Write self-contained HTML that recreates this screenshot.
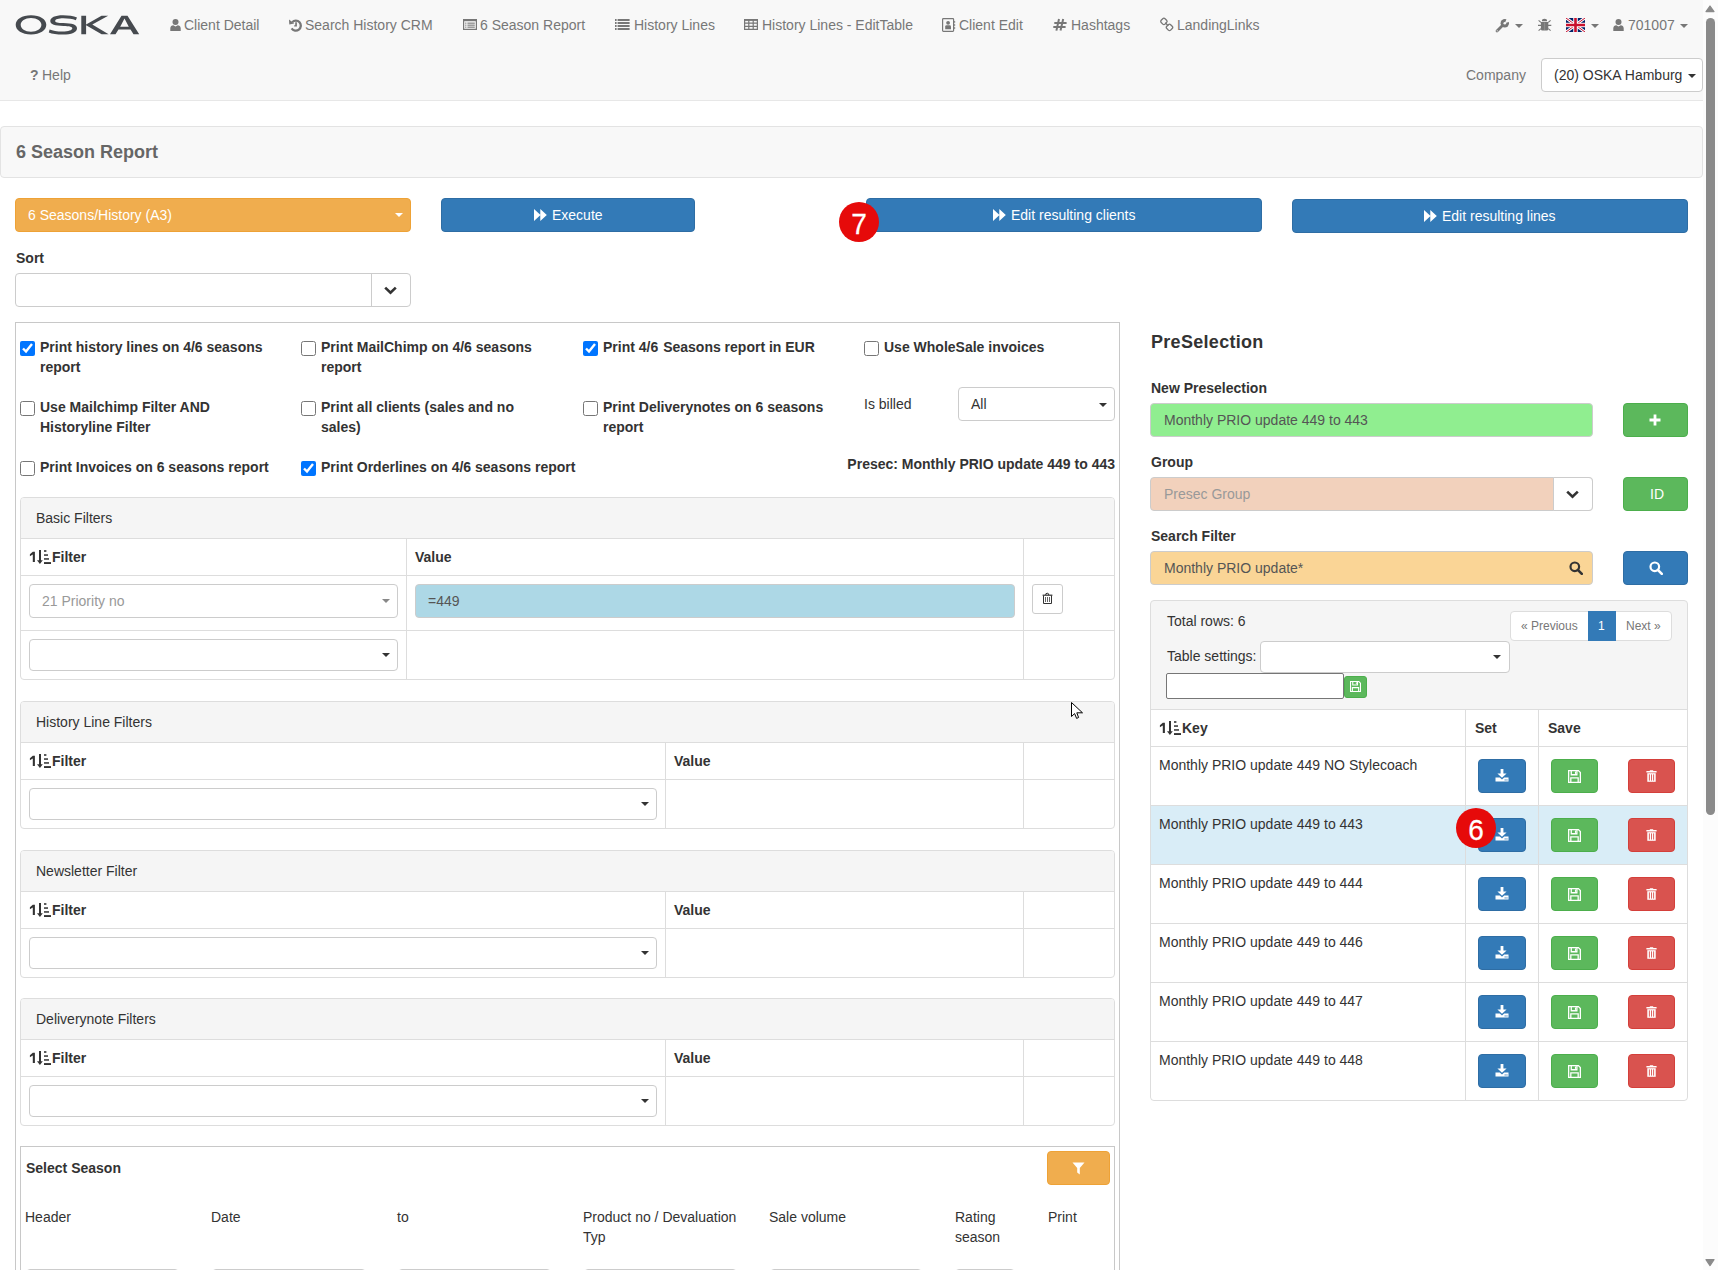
<!DOCTYPE html>
<html><head><meta charset="utf-8">
<style>
*{box-sizing:border-box}
html,body{margin:0;padding:0;overflow:hidden}
body{width:1718px;height:1270px;overflow:hidden;position:relative;background:#fff;font-family:"Liberation Sans",sans-serif;font-size:14px;line-height:20px;color:#333}
.a{position:absolute}
.t{position:absolute;white-space:nowrap;line-height:20px}
.b{font-weight:bold}
.nav{color:#777}
svg{display:block}
.ico{position:absolute}
.fc{position:absolute;background:#fff;border:1px solid #ccc;border-radius:4px}
.btn{position:absolute;border-radius:4px;border:1px solid transparent}
.bp{background:#337ab7;border-color:#2e6da4}
.bs{background:#5cb85c;border-color:#4cae4c}
.bd{background:#d9534f;border-color:#d43f3a}
.bw{background:#f0ad4e;border-color:#eea236}
.caret{position:absolute;width:0;height:0;border-top:4px solid #333;border-left:4px solid transparent;border-right:4px solid transparent}
.hl{position:absolute;height:1px;background:#ddd}
.vl{position:absolute;width:1px;background:#ddd}
.panel{position:absolute;border:1px solid #ddd;border-radius:4px;background:#fff}
.ph{position:absolute;left:0;right:0;top:0;height:41px;background:#f5f5f5;border-bottom:1px solid #ddd;border-radius:3px 3px 0 0}
.badge{position:absolute;width:40px;height:40px;border-radius:20px;background:#e60a0a;color:#fff;font-size:28px;line-height:40px;text-align:center}
</style></head><body><div id="root" style="position:relative;width:1718px;height:1270px;overflow:hidden">

<!-- NAVBAR -->
<div class="a" style="left:0;top:0;width:1703px;height:101px;background:#f8f8f8;border-bottom:1px solid #e7e7e7"></div>

<!-- logo -->
<svg class="ico" style="left:15px;top:15px" width="125" height="20" viewBox="0 0 125 20">
 <path fill="#464a4f" fill-rule="evenodd" d="M16 0.2C7 0.2 0.7 4.2 0.7 9.8S7 19.5 16 19.5 31.3 15.4 31.3 9.8 25 0.2 16 0.2ZM16 2.9C22 2.9 26.4 5.8 26.4 9.8S22 16.8 16 16.8 5.7 13.8 5.7 9.8 10 2.9 16 2.9Z"/>
 <path fill="#464a4f" d="M62 2.5C58.5 1 53.5 0.3 48 0.3 40 0.3 35.3 2.6 35.3 6 35.3 9.6 40 10.6 48.5 11 54 11.3 57.3 11.6 57.3 13.3 57.3 15.2 53.5 16.6 47.5 16.6 42 16.6 37.5 15.6 34.6 14.5L33.8 17.4C37 18.7 42 19.6 47.8 19.6 56.6 19.6 62 17.4 62 13.3 62 9.4 57 8.4 48.3 8 42.6 7.8 40.2 7.5 40.2 5.9 40.2 4.3 43.6 3.3 48.2 3.3 53.5 3.3 57.5 4 60.8 5.2Z"/>
 <path fill="#464a4f" d="M66.3 0.8H71.1V9.6L86.5 0.8H93.2L77.3 9.4 93.6 19.3H86.6L71.1 10.2V19.3H66.3Z"/>
 <path fill="#464a4f" fill-rule="evenodd" d="M106.5 0.8H112.5L124.2 19.3H118.5L115.5 14.5H103.5L100.5 19.3H95Z M109.5 3.6L105.2 11.7H113.8Z"/>
</svg>


<!-- nav row 1 -->
<svg class="ico" style="left:170px;top:19px" width="11" height="12" viewBox="0 0 11 12"><circle cx="5.5" cy="3" r="3" fill="#777"/><path d="M0.3 12V9.2C0.3 7.3 1.8 6.6 3.2 6.3L5.5 7.6 7.8 6.3C9.2 6.6 10.7 7.3 10.7 9.2V12Z" fill="#777"/></svg>
<div class="t nav" style="left:184px;top:15px">Client Detail</div>
<svg class="ico" style="left:289px;top:18px" width="13" height="14" viewBox="0 0 13 14"><path d="M3.2 4.2A5 5 0 1 1 2.6 10.4" fill="none" stroke="#777" stroke-width="2.3"/><path d="M0 1.6L0.3 6.6 5.2 5.6Z" fill="#777"/><path d="M6.2 4.2H7.9V8.6H5.2V7.2H6.2Z" fill="#777"/></svg>
<div class="t nav" style="left:305px;top:15px">Search History CRM</div>
<svg class="ico" style="left:463px;top:19px" width="14" height="11" viewBox="0 0 14 11"><path d="M0.6 0.6H13.4V10.4H0.6Z" fill="none" stroke="#777" stroke-width="1.2"/><rect x="0" y="0" width="14" height="2.2" fill="#777"/><rect x="2.2" y="3.6" width="1.2" height="1.1" fill="#777"/><rect x="4.4" y="3.6" width="7.4" height="1.1" fill="#777"/><rect x="2.2" y="5.6" width="1.2" height="1.1" fill="#777"/><rect x="4.4" y="5.6" width="7.4" height="1.1" fill="#777"/><rect x="2.2" y="7.6" width="1.2" height="1.1" fill="#777"/><rect x="4.4" y="7.6" width="7.4" height="1.1" fill="#777"/></svg>
<div class="t nav" style="left:480px;top:15px">6 Season Report</div>
<svg class="ico" style="left:615px;top:19px" width="15" height="11" viewBox="0 0 15 11"><g fill="#777"><rect x="0" y="0" width="1.6" height="2"/><rect x="2.6" y="0" width="12" height="2"/><rect x="0" y="3" width="1.6" height="2"/><rect x="2.6" y="3" width="12" height="2"/><rect x="0" y="6" width="1.6" height="2"/><rect x="2.6" y="6" width="12" height="2"/><rect x="0" y="9" width="1.6" height="2"/><rect x="2.6" y="9" width="12" height="2"/></g></svg>
<div class="t nav" style="left:634px;top:15px">History Lines</div>
<svg class="ico" style="left:744px;top:19px" width="14" height="11" viewBox="0 0 14 11"><path d="M0.6 1H13.4V10.4H0.6ZM0.6 4.2H13.4M0.6 7.3H13.4M4.8 1V10.4M9.2 1V10.4" fill="none" stroke="#777" stroke-width="1.2"/><rect x="0" y="0" width="14" height="1.8" fill="#777"/></svg>
<div class="t nav" style="left:762px;top:15px">History Lines - EditTable</div>
<svg class="ico" style="left:942px;top:18px" width="14" height="14" viewBox="0 0 14 14"><rect x="0.6" y="0.6" width="11" height="12.8" rx="0.8" fill="none" stroke="#777" stroke-width="1.2"/><circle cx="6.1" cy="4.8" r="1.9" fill="#777"/><path d="M3.2 11.2V8.6Q3.2 7.2 4.6 7.2H7.6Q9 7.2 9 8.6V11.2Z" fill="#777"/><rect x="11.8" y="3.2" width="1.4" height="1.4" fill="#777"/><rect x="11.8" y="6.3" width="1.4" height="1.4" fill="#777"/><rect x="11.8" y="9.3" width="1.4" height="1.4" fill="#777"/></svg>
<div class="t nav" style="left:959px;top:15px">Client Edit</div>
<svg class="ico" style="left:1053px;top:18px" width="15" height="14" viewBox="0 0 15 14"><path d="M6 1L3.4 12.6M10.2 1L7.5 12.6M1.3 4.9H13.6M0.3 9H12.6" fill="none" stroke="#777" stroke-width="2"/></svg>
<div class="t nav" style="left:1071px;top:15px">Hashtags</div>
<svg class="ico" style="left:1159px;top:16px" width="16" height="16" viewBox="0 0 16 16"><rect x="2.2" y="2.7" width="5.4" height="5.4" rx="1.6" transform="rotate(45 4.9 5.4)" fill="none" stroke="#777" stroke-width="1.3"/><rect x="7.8" y="8.7" width="5.4" height="5.4" rx="1.6" transform="rotate(45 10.5 11.4)" fill="none" stroke="#777" stroke-width="1.3"/><path d="M6.2 6.8L9.2 9.8" stroke="#777" stroke-width="1.3"/></svg>
<div class="t nav" style="left:1177px;top:15px">LandingLinks</div>

<!-- right icons -->
<svg class="ico" style="left:1495px;top:18px" width="15" height="15" viewBox="0 0 15 15"><path d="M2 13L8.2 6.8" stroke="#777" stroke-width="2.8" stroke-linecap="round"/><circle cx="9.8" cy="5.2" r="4.2" fill="#777"/><path d="M9.8 5.2L12.2 -0.5 16 -0.5 16 3.2Z" fill="#f8f8f8"/><circle cx="9.8" cy="5.2" r="1.3" fill="#f8f8f8"/><circle cx="2.2" cy="12.8" r="0.6" fill="#f8f8f8"/></svg>
<div class="caret" style="left:1515px;top:24px;border-top-color:#777"></div>
<svg class="ico" style="left:1537px;top:17px" width="16" height="15" viewBox="0 0 16 15"><path d="M4.9 4.2A2.6 2.4 0 0 1 10.1 4.2Z" fill="#777"/><path d="M3.9 5H11.3V12A1.5 1.5 0 0 1 9.8 13.5H5.4A1.5 1.5 0 0 1 3.9 12Z" fill="#777"/><path d="M1 8.4H14.3M1.6 3.4L3.9 5.4M13.6 3.4L11.3 5.4M1.6 13.6L3.9 11.6M13.6 13.6L11.3 11.6" stroke="#777" stroke-width="1.1"/><path d="M7.6 5.5V13" stroke="#9a9a9a" stroke-width="0.7"/></svg>
<svg class="ico" style="left:1566px;top:18px" width="19" height="14" viewBox="0 0 19 14"><rect width="19" height="14" fill="#012169"/><path d="M0 0L19 14M19 0L0 14" stroke="#fff" stroke-width="3"/><path d="M0 0L19 14M19 0L0 14" stroke="#c8102e" stroke-width="1"/><path d="M9.5 0V14M0 7H19" stroke="#fff" stroke-width="4.5"/><path d="M9.5 0V14M0 7H19" stroke="#c8102e" stroke-width="2.6"/></svg>
<div class="caret" style="left:1591px;top:24px;border-top-color:#777"></div>
<svg class="ico" style="left:1613px;top:19px" width="11" height="12" viewBox="0 0 11 12"><circle cx="5.5" cy="3" r="3" fill="#777"/><path d="M0.3 12V9.2C0.3 7.3 1.8 6.6 3.2 6.3L5.5 7.6 7.8 6.3C9.2 6.6 10.7 7.3 10.7 9.2V12Z" fill="#777"/></svg>
<div class="t nav" style="left:1628px;top:15px">701007</div>
<div class="caret" style="left:1680px;top:24px;border-top-color:#777"></div>

<!-- nav row 2 -->
<div class="t nav b" style="left:30px;top:65px">?</div>
<div class="t nav" style="left:42px;top:65px">Help</div>
<div class="t nav" style="left:1466px;top:65px">Company</div>
<div class="fc" style="left:1541px;top:58px;width:162px;height:34px"></div>
<div class="t" style="left:1554px;top:65px">(20) OSKA Hamburg</div>
<div class="caret" style="left:1688px;top:74px"></div>

<!-- scrollbar -->
<div class="a" style="left:1703px;top:0;width:15px;height:1270px;background:#fcfcfc"></div>
<svg class="ico" style="left:1705px;top:5px" width="10" height="8" viewBox="0 0 10 8"><path d="M5 1L9 6.6H1Z" fill="#8a8a8a" stroke="#8a8a8a" stroke-width="1.2" stroke-linejoin="round"/></svg>
<div class="a" style="left:1706px;top:18px;width:9px;height:797px;border-radius:4.5px;background:#8a8a8a"></div>
<svg class="ico" style="left:1705px;top:1258px" width="10" height="9" viewBox="0 0 10 9"><path d="M5 7.6L9 1.6H1Z" fill="#8a8a8a" stroke="#8a8a8a" stroke-width="1.2" stroke-linejoin="round"/></svg>

<!-- header panel -->
<div class="a" style="left:0;top:126px;width:1703px;height:52px;background:#f8f8f8;border:1px solid #e3e3e3;border-radius:4px"></div>
<div class="t b" style="left:16px;top:140px;font-size:18px;line-height:24px;color:#666">6 Season Report</div>


<!-- top controls -->
<div class="btn bw" style="left:15px;top:198px;width:396px;height:34px"></div>
<div class="t" style="left:28px;top:205px;color:#fff">6 Seasons/History (A3)</div>
<div class="caret" style="left:395px;top:213px;border-top-color:#fff"></div>

<div class="btn bp" style="left:441px;top:198px;width:254px;height:34px"></div>
<svg class="ico" style="left:534px;top:209px" width="13" height="12" viewBox="0 0 13 12"><path d="M0 0L6.5 6 0 12ZM6.3 0L12.8 6 6.3 12Z" fill="#fff"/></svg>
<div class="t" style="left:552px;top:205px;color:#fff">Execute</div>

<div class="btn bp" style="left:866px;top:198px;width:396px;height:34px"></div>
<svg class="ico" style="left:993px;top:209px" width="13" height="12" viewBox="0 0 13 12"><path d="M0 0L6.5 6 0 12ZM6.3 0L12.8 6 6.3 12Z" fill="#fff"/></svg>
<div class="t" style="left:1011px;top:205px;color:#fff">Edit resulting clients</div>

<div class="btn bp" style="left:1292px;top:199px;width:396px;height:34px"></div>
<svg class="ico" style="left:1424px;top:210px" width="13" height="12" viewBox="0 0 13 12"><path d="M0 0L6.5 6 0 12ZM6.3 0L12.8 6 6.3 12Z" fill="#fff"/></svg>
<div class="t" style="left:1442px;top:206px;color:#fff">Edit resulting lines</div>

<div class="badge" style="left:839px;top:202px"><span style="display:inline-block;transform:scaleY(1.07);transform-origin:50% 20px;position:relative;top:2px;-webkit-text-stroke:0.25px #fff">7</span></div>

<div class="t b" style="left:16px;top:248px">Sort</div>
<div class="fc" style="left:15px;top:273px;width:396px;height:34px"></div>
<div class="vl" style="left:371px;top:274px;height:32px;background:#ccc"></div>
<svg class="ico" style="left:384px;top:286px" width="13" height="10" viewBox="0 0 13 10"><path d="M1.2 1.6L6.5 6.8 11.8 1.6" fill="none" stroke="#333" stroke-width="2.6"/></svg>

<!-- left outer box -->
<div class="a" style="left:15px;top:322px;width:1105px;height:960px;border:1px solid #c8c8c8"></div>

<input type="checkbox" class="a" style="left:20px;top:341px;width:15px;height:15px;margin:0" checked><div class="t b" style="left:40px;top:337px;">Print history lines on 4/6 seasons</div><div class="t b" style="left:40px;top:357px;">report</div><input type="checkbox" class="a" style="left:301px;top:341px;width:15px;height:15px;margin:0"><div class="t b" style="left:321px;top:337px;">Print MailChimp on 4/6 seasons</div><div class="t b" style="left:321px;top:357px;">report</div><input type="checkbox" class="a" style="left:583px;top:341px;width:15px;height:15px;margin:0" checked><div class="t b" style="left:603px;top:337px;">Print 4/6 <span style="padding-left:1px"></span>Seasons report in EUR</div><input type="checkbox" class="a" style="left:864px;top:341px;width:15px;height:15px;margin:0"><div class="t b" style="left:884px;top:337px;">Use WholeSale invoices</div><input type="checkbox" class="a" style="left:20px;top:401px;width:15px;height:15px;margin:0"><div class="t b" style="left:40px;top:397px;">Use Mailchimp Filter AND</div><div class="t b" style="left:40px;top:417px;">Historyline Filter</div><input type="checkbox" class="a" style="left:301px;top:401px;width:15px;height:15px;margin:0"><div class="t b" style="left:321px;top:397px;">Print all clients (sales and no</div><div class="t b" style="left:321px;top:417px;">sales)</div><input type="checkbox" class="a" style="left:583px;top:401px;width:15px;height:15px;margin:0"><div class="t b" style="left:603px;top:397px;">Print Deliverynotes on 6 seasons</div><div class="t b" style="left:603px;top:417px;">report</div><div class="t" style="left:864px;top:394px;">Is billed</div><div class="fc" style="left:958px;top:387px;width:157px;height:34px"></div><div class="t" style="left:971px;top:394px;">All</div><div class="caret" style="left:1099px;top:403px"></div><input type="checkbox" class="a" style="left:20px;top:461px;width:15px;height:15px;margin:0"><div class="t b" style="left:40px;top:457px;">Print Invoices on 6 seasons report</div><input type="checkbox" class="a" style="left:301px;top:461px;width:15px;height:15px;margin:0" checked><div class="t b" style="left:321px;top:457px;">Print Orderlines on 4/6 seasons report</div><div class="t b" style="right:603px;top:454px">Presec: Monthly PRIO update 449 to 443</div>
<div class="panel" style="left:20px;top:497px;width:1095px;height:183px"><div class="ph"></div></div><div class="t" style="left:36px;top:508px;">Basic Filters</div><div class="vl" style="left:406px;top:538px;height:141px"></div><div class="vl" style="left:1023px;top:538px;height:141px"></div><div class="hl" style="left:21px;top:575px;width:1093px"></div><svg class="ico" style="left:29px;top:549px" width="23" height="16" viewBox="0 0 23 16"><path d="M3.8 2.8H5.9V13H3.8V5.4L0.9 7.2V5.3L3.8 2.8Z" fill="#333"/><rect x="10" y="1" width="2" height="11" fill="#333"/><path d="M8 11.2H13.8L10.9 15Z" fill="#333"/><rect x="15" y="1.2" width="2.4" height="1.6" fill="#333"/><rect x="15" y="5.3" width="4" height="1.5" fill="#333"/><rect x="15" y="9.2" width="5" height="1.5" fill="#333"/><rect x="15" y="13.1" width="7" height="1.9" fill="#333"/></svg><div class="t b" style="left:52px;top:547px;">Filter</div><div class="t b" style="left:415px;top:547px;">Value</div><div class="hl" style="left:21px;top:630px;width:1093px"></div><div class="fc" style="left:29px;top:584px;width:369px;height:34px"></div><div class="t" style="left:42px;top:591px;color:#999">21 Priority no</div><div class="caret" style="left:382px;top:599px;border-top-color:#888"></div><div class="fc" style="left:415px;top:584px;width:600px;height:34px;background:#add8e6"></div><div class="t" style="left:428px;top:591px;color:#555">=449</div><div class="btn" style="left:1032px;top:584px;width:31px;height:30px;background:#fff;border-color:#ccc;border-radius:3px"></div><svg class="ico" style="left:1042px;top:592px" width="11" height="13" viewBox="0 0 11 13"><path d="M3.8 3V1.8Q5.2 0.6 6.6 1.8V3" fill="none" stroke="#333" stroke-width="1"/><rect x="0.6" y="2.6" width="9.8" height="1.2" fill="#333"/><path d="M1.5 3.5V11.5H9.5V3.5" fill="none" stroke="#333" stroke-width="1"/><path d="M3.5 5V10M5.5 5V10M7.5 5V10" stroke="#555" stroke-width="0.9"/></svg><div class="fc" style="left:29px;top:639px;width:369px;height:32px"></div><div class="caret" style="left:382px;top:653px"></div><div class="panel" style="left:20px;top:701px;width:1095px;height:128px"><div class="ph"></div></div><div class="t" style="left:36px;top:712px;">History Line Filters</div><div class="vl" style="left:665px;top:742px;height:86px"></div><div class="vl" style="left:1023px;top:742px;height:86px"></div><div class="hl" style="left:21px;top:779px;width:1093px"></div><svg class="ico" style="left:29px;top:753px" width="23" height="16" viewBox="0 0 23 16"><path d="M3.8 2.8H5.9V13H3.8V5.4L0.9 7.2V5.3L3.8 2.8Z" fill="#333"/><rect x="10" y="1" width="2" height="11" fill="#333"/><path d="M8 11.2H13.8L10.9 15Z" fill="#333"/><rect x="15" y="1.2" width="2.4" height="1.6" fill="#333"/><rect x="15" y="5.3" width="4" height="1.5" fill="#333"/><rect x="15" y="9.2" width="5" height="1.5" fill="#333"/><rect x="15" y="13.1" width="7" height="1.9" fill="#333"/></svg><div class="t b" style="left:52px;top:751px;">Filter</div><div class="t b" style="left:674px;top:751px;">Value</div><div class="fc" style="left:29px;top:788px;width:628px;height:32px"></div><div class="caret" style="left:641px;top:802px"></div><div class="panel" style="left:20px;top:850px;width:1095px;height:128px"><div class="ph"></div></div><div class="t" style="left:36px;top:861px;">Newsletter Filter</div><div class="vl" style="left:665px;top:891px;height:86px"></div><div class="vl" style="left:1023px;top:891px;height:86px"></div><div class="hl" style="left:21px;top:928px;width:1093px"></div><svg class="ico" style="left:29px;top:902px" width="23" height="16" viewBox="0 0 23 16"><path d="M3.8 2.8H5.9V13H3.8V5.4L0.9 7.2V5.3L3.8 2.8Z" fill="#333"/><rect x="10" y="1" width="2" height="11" fill="#333"/><path d="M8 11.2H13.8L10.9 15Z" fill="#333"/><rect x="15" y="1.2" width="2.4" height="1.6" fill="#333"/><rect x="15" y="5.3" width="4" height="1.5" fill="#333"/><rect x="15" y="9.2" width="5" height="1.5" fill="#333"/><rect x="15" y="13.1" width="7" height="1.9" fill="#333"/></svg><div class="t b" style="left:52px;top:900px;">Filter</div><div class="t b" style="left:674px;top:900px;">Value</div><div class="fc" style="left:29px;top:937px;width:628px;height:32px"></div><div class="caret" style="left:641px;top:951px"></div><div class="panel" style="left:20px;top:998px;width:1095px;height:128px"><div class="ph"></div></div><div class="t" style="left:36px;top:1009px;">Deliverynote Filters</div><div class="vl" style="left:665px;top:1039px;height:86px"></div><div class="vl" style="left:1023px;top:1039px;height:86px"></div><div class="hl" style="left:21px;top:1076px;width:1093px"></div><svg class="ico" style="left:29px;top:1050px" width="23" height="16" viewBox="0 0 23 16"><path d="M3.8 2.8H5.9V13H3.8V5.4L0.9 7.2V5.3L3.8 2.8Z" fill="#333"/><rect x="10" y="1" width="2" height="11" fill="#333"/><path d="M8 11.2H13.8L10.9 15Z" fill="#333"/><rect x="15" y="1.2" width="2.4" height="1.6" fill="#333"/><rect x="15" y="5.3" width="4" height="1.5" fill="#333"/><rect x="15" y="9.2" width="5" height="1.5" fill="#333"/><rect x="15" y="13.1" width="7" height="1.9" fill="#333"/></svg><div class="t b" style="left:52px;top:1048px;">Filter</div><div class="t b" style="left:674px;top:1048px;">Value</div><div class="fc" style="left:29px;top:1085px;width:628px;height:32px"></div><div class="caret" style="left:641px;top:1099px"></div><div class="a" style="left:20px;top:1146px;width:1095px;height:200px;border:1px solid #c8c8c8"></div><div class="t b" style="left:26px;top:1158px;">Select Season</div><div class="btn bw" style="left:1047px;top:1151px;width:63px;height:34px"></div><svg class="ico" style="left:1072px;top:1162px" width="13" height="13" viewBox="0 0 13 13"><path d="M0.5 0.5H12.5L7.8 6V12.5L5.2 10.5V6Z" fill="#fff"/></svg><div class="t" style="left:25px;top:1207px;">Header</div><div class="t" style="left:211px;top:1207px;">Date</div><div class="t" style="left:397px;top:1207px;">to</div><div class="t" style="left:583px;top:1207px;">Product no / Devaluation</div><div class="t" style="left:769px;top:1207px;">Sale volume</div><div class="t" style="left:955px;top:1207px;">Rating</div><div class="t" style="left:1048px;top:1207px;">Print</div><div class="t" style="left:583px;top:1227px;">Typ</div><div class="t" style="left:955px;top:1227px;">season</div><div class="fc" style="left:26px;top:1269px;width:153px;height:34px"></div><div class="fc" style="left:212px;top:1269px;width:154px;height:34px"></div><div class="fc" style="left:398px;top:1269px;width:153px;height:34px"></div><div class="fc" style="left:584px;top:1269px;width:153px;height:34px"></div><div class="fc" style="left:770px;top:1269px;width:152px;height:34px"></div><div class="fc" style="left:955px;top:1269px;width:60px;height:34px"></div>
<div class="t b" style="left:1151px;top:330px;font-size:18px;line-height:24px;letter-spacing:0.3px">PreSelection</div><div class="t b" style="left:1151px;top:378px;">New Preselection</div><div class="fc" style="left:1150px;top:403px;width:443px;height:34px;background:#90ee90"></div><div class="t" style="left:1164px;top:410px;color:#555">Monthly PRIO update 449 to 443</div><div class="btn bs" style="left:1623px;top:403px;width:65px;height:34px"></div><svg class="ico" style="left:1649px;top:414px" width="12" height="12" viewBox="0 0 12 12"><path d="M4.6 0.5H7.4V4.6H11.5V7.4H7.4V11.5H4.6V7.4H0.5V4.6H4.6Z" fill="#fff"/></svg><div class="t b" style="left:1151px;top:452px;">Group</div><div class="fc" style="left:1150px;top:477px;width:443px;height:34px;background:#f2d1bc"></div><div class="t" style="left:1164px;top:484px;color:#999">Presec Group</div><div class="a" style="left:1553px;top:477px;width:40px;height:34px;background:#fff;border:1px solid #ccc;border-radius:0 4px 4px 0"></div><svg class="ico" style="left:1566px;top:490px" width="13" height="10" viewBox="0 0 13 10"><path d="M1.2 1.6L6.5 6.8 11.8 1.6" fill="none" stroke="#333" stroke-width="2.6"/></svg><div class="btn bs" style="left:1623px;top:477px;width:65px;height:34px"></div><div class="t" style="left:1650px;top:484px;color:#fff">ID</div><div class="t b" style="left:1151px;top:526px;">Search Filter</div><div class="fc" style="left:1150px;top:551px;width:443px;height:34px;background:#fad596"></div><div class="t" style="left:1164px;top:558px;color:#555">Monthly PRIO update*</div><svg class="ico" style="left:1569px;top:561px" width="14" height="14" viewBox="0 0 14 14"><circle cx="5.8" cy="5.8" r="4.3" fill="none" stroke="#333" stroke-width="2.2"/><path d="M8.8 8.8L12.8 12.8" stroke="#333" stroke-width="2.6" stroke-linecap="round"/></svg><div class="btn bp" style="left:1623px;top:551px;width:65px;height:34px"></div><svg class="ico" style="left:1649px;top:561px" width="14" height="14" viewBox="0 0 14 14"><circle cx="5.8" cy="5.8" r="4.3" fill="none" stroke="#fff" stroke-width="2.2"/><path d="M8.8 8.8L12.8 12.8" stroke="#fff" stroke-width="2.6" stroke-linecap="round"/></svg><div class="a" style="left:1150px;top:600px;width:538px;height:501px;background:#f5f5f5;border:1px solid #ddd;border-radius:4px"></div><div class="t" style="left:1167px;top:611px;">Total rows: 6</div><div class="a" style="left:1510px;top:611px;width:162px;height:30px;background:#fff;border:1px solid #ddd;border-radius:4px"></div><div class="a" style="left:1588px;top:611px;width:28px;height:30px;background:#337ab7;border:1px solid #337ab7"></div><div class="t" style="left:1521px;top:617px;font-size:12px;line-height:18px;color:#777">« Previous</div><div class="t" style="left:1598px;top:617px;font-size:12px;line-height:18px;color:#fff">1</div><div class="t" style="left:1626px;top:617px;font-size:12px;line-height:18px;color:#777">Next »</div><div class="t" style="left:1167px;top:646px;">Table settings:</div><div class="fc" style="left:1260px;top:641px;width:250px;height:32px"></div><div class="caret" style="left:1493px;top:655px"></div><div class="a" style="left:1166px;top:673px;width:178px;height:26px;background:#fff;border:1px solid #767676;border-radius:2px"></div><div class="a" style="left:1344px;top:676px;width:23px;height:22px;background:#5cb85c;border:1px solid #4cae4c;border-radius:3px"></div><svg class="ico" style="left:1350px;top:681px" width="11" height="11" viewBox="0 0 12 12"><path d="M0.6 0.6H9.6L11.4 2.4V11.4H0.6Z" fill="none" stroke="#fff" stroke-width="1.2"/><path d="M3 0.6V4.4H8.2V0.6" fill="none" stroke="#fff" stroke-width="1.2"/><rect x="6.4" y="1.4" width="1" height="2.2" fill="#fff"/><path d="M2.6 11.4V7.2H9.4V11.4" fill="none" stroke="#fff" stroke-width="1.2"/></svg><div class="a" style="left:1151px;top:709px;width:536px;height:391px;background:#fff;border-top:1px solid #ddd;border-radius:0 0 4px 4px"></div><div class="a" style="left:1151px;top:805px;width:536px;height:59px;background:#d9edf7"></div><div class="hl" style="left:1151px;top:746px;width:536px"></div><div class="hl" style="left:1151px;top:805px;width:536px"></div><div class="hl" style="left:1151px;top:864px;width:536px"></div><div class="hl" style="left:1151px;top:923px;width:536px"></div><div class="hl" style="left:1151px;top:982px;width:536px"></div><div class="hl" style="left:1151px;top:1041px;width:536px"></div><div class="vl" style="left:1465px;top:710px;height:390px"></div><div class="vl" style="left:1538px;top:710px;height:390px"></div><svg class="ico" style="left:1159px;top:720px" width="23" height="16" viewBox="0 0 23 16"><path d="M3.8 2.8H5.9V13H3.8V5.4L0.9 7.2V5.3L3.8 2.8Z" fill="#333"/><rect x="10" y="1" width="2" height="11" fill="#333"/><path d="M8 11.2H13.8L10.9 15Z" fill="#333"/><rect x="15" y="1.2" width="2.4" height="1.6" fill="#333"/><rect x="15" y="5.3" width="4" height="1.5" fill="#333"/><rect x="15" y="9.2" width="5" height="1.5" fill="#333"/><rect x="15" y="13.1" width="7" height="1.9" fill="#333"/></svg><div class="t b" style="left:1182px;top:718px;">Key</div><div class="t b" style="left:1475px;top:718px;">Set</div><div class="t b" style="left:1548px;top:718px;">Save</div><div class="t" style="left:1159px;top:755px;">Monthly PRIO update 449 NO Stylecoach</div><div class="btn bp" style="left:1478px;top:759px;width:48px;height:34px"></div><svg class="ico" style="left:1495px;top:769px" width="14" height="13" viewBox="0 0 14 13"><path d="M5.6 0H8.4V4.4H11.6L7 8.8 2.4 4.4H5.6Z" fill="#fff"/><path d="M0.5 8.6H4.8L7 10.6 9.2 8.6H13.5V12.6H0.5Z" fill="#fff"/><rect x="9.6" y="10.4" width="1.1" height="1.1" fill="#337ab7"/><rect x="11.4" y="10.4" width="1.1" height="1.1" fill="#337ab7"/></svg><div class="btn bs" style="left:1551px;top:759px;width:47px;height:34px"></div><svg class="ico" style="left:1568px;top:770px" width="13" height="13" viewBox="0 0 12 12"><path d="M0.6 0.6H9.6L11.4 2.4V11.4H0.6Z" fill="none" stroke="#fff" stroke-width="1.2"/><path d="M3 0.6V4.4H8.2V0.6" fill="none" stroke="#fff" stroke-width="1.2"/><rect x="6.4" y="1.4" width="1" height="2.2" fill="#fff"/><path d="M2.6 11.4V7.2H9.4V11.4" fill="none" stroke="#fff" stroke-width="1.2"/></svg><div class="btn bd" style="left:1628px;top:759px;width:47px;height:34px"></div><svg class="ico" style="left:1646px;top:770px" width="11" height="12" viewBox="0 0 11 12"><path d="M3.8 1V0.2H7.2V1H10.6V2.4H0.4V1Z" fill="#fff"/><path d="M1.3 3.2H9.7V11.8H1.3Z" fill="#fff"/><path d="M3.4 4.4V10.6M5.5 4.4V10.6M7.6 4.4V10.6" stroke="#d9534f" stroke-width="0.9"/></svg><div class="t" style="left:1159px;top:814px;">Monthly PRIO update 449 to 443</div><div class="btn bp" style="left:1478px;top:818px;width:48px;height:34px"></div><svg class="ico" style="left:1495px;top:828px" width="14" height="13" viewBox="0 0 14 13"><path d="M5.6 0H8.4V4.4H11.6L7 8.8 2.4 4.4H5.6Z" fill="#fff"/><path d="M0.5 8.6H4.8L7 10.6 9.2 8.6H13.5V12.6H0.5Z" fill="#fff"/><rect x="9.6" y="10.4" width="1.1" height="1.1" fill="#337ab7"/><rect x="11.4" y="10.4" width="1.1" height="1.1" fill="#337ab7"/></svg><div class="btn bs" style="left:1551px;top:818px;width:47px;height:34px"></div><svg class="ico" style="left:1568px;top:829px" width="13" height="13" viewBox="0 0 12 12"><path d="M0.6 0.6H9.6L11.4 2.4V11.4H0.6Z" fill="none" stroke="#fff" stroke-width="1.2"/><path d="M3 0.6V4.4H8.2V0.6" fill="none" stroke="#fff" stroke-width="1.2"/><rect x="6.4" y="1.4" width="1" height="2.2" fill="#fff"/><path d="M2.6 11.4V7.2H9.4V11.4" fill="none" stroke="#fff" stroke-width="1.2"/></svg><div class="btn bd" style="left:1628px;top:818px;width:47px;height:34px"></div><svg class="ico" style="left:1646px;top:829px" width="11" height="12" viewBox="0 0 11 12"><path d="M3.8 1V0.2H7.2V1H10.6V2.4H0.4V1Z" fill="#fff"/><path d="M1.3 3.2H9.7V11.8H1.3Z" fill="#fff"/><path d="M3.4 4.4V10.6M5.5 4.4V10.6M7.6 4.4V10.6" stroke="#d9534f" stroke-width="0.9"/></svg><div class="t" style="left:1159px;top:873px;">Monthly PRIO update 449 to 444</div><div class="btn bp" style="left:1478px;top:877px;width:48px;height:34px"></div><svg class="ico" style="left:1495px;top:887px" width="14" height="13" viewBox="0 0 14 13"><path d="M5.6 0H8.4V4.4H11.6L7 8.8 2.4 4.4H5.6Z" fill="#fff"/><path d="M0.5 8.6H4.8L7 10.6 9.2 8.6H13.5V12.6H0.5Z" fill="#fff"/><rect x="9.6" y="10.4" width="1.1" height="1.1" fill="#337ab7"/><rect x="11.4" y="10.4" width="1.1" height="1.1" fill="#337ab7"/></svg><div class="btn bs" style="left:1551px;top:877px;width:47px;height:34px"></div><svg class="ico" style="left:1568px;top:888px" width="13" height="13" viewBox="0 0 12 12"><path d="M0.6 0.6H9.6L11.4 2.4V11.4H0.6Z" fill="none" stroke="#fff" stroke-width="1.2"/><path d="M3 0.6V4.4H8.2V0.6" fill="none" stroke="#fff" stroke-width="1.2"/><rect x="6.4" y="1.4" width="1" height="2.2" fill="#fff"/><path d="M2.6 11.4V7.2H9.4V11.4" fill="none" stroke="#fff" stroke-width="1.2"/></svg><div class="btn bd" style="left:1628px;top:877px;width:47px;height:34px"></div><svg class="ico" style="left:1646px;top:888px" width="11" height="12" viewBox="0 0 11 12"><path d="M3.8 1V0.2H7.2V1H10.6V2.4H0.4V1Z" fill="#fff"/><path d="M1.3 3.2H9.7V11.8H1.3Z" fill="#fff"/><path d="M3.4 4.4V10.6M5.5 4.4V10.6M7.6 4.4V10.6" stroke="#d9534f" stroke-width="0.9"/></svg><div class="t" style="left:1159px;top:932px;">Monthly PRIO update 449 to 446</div><div class="btn bp" style="left:1478px;top:936px;width:48px;height:34px"></div><svg class="ico" style="left:1495px;top:946px" width="14" height="13" viewBox="0 0 14 13"><path d="M5.6 0H8.4V4.4H11.6L7 8.8 2.4 4.4H5.6Z" fill="#fff"/><path d="M0.5 8.6H4.8L7 10.6 9.2 8.6H13.5V12.6H0.5Z" fill="#fff"/><rect x="9.6" y="10.4" width="1.1" height="1.1" fill="#337ab7"/><rect x="11.4" y="10.4" width="1.1" height="1.1" fill="#337ab7"/></svg><div class="btn bs" style="left:1551px;top:936px;width:47px;height:34px"></div><svg class="ico" style="left:1568px;top:947px" width="13" height="13" viewBox="0 0 12 12"><path d="M0.6 0.6H9.6L11.4 2.4V11.4H0.6Z" fill="none" stroke="#fff" stroke-width="1.2"/><path d="M3 0.6V4.4H8.2V0.6" fill="none" stroke="#fff" stroke-width="1.2"/><rect x="6.4" y="1.4" width="1" height="2.2" fill="#fff"/><path d="M2.6 11.4V7.2H9.4V11.4" fill="none" stroke="#fff" stroke-width="1.2"/></svg><div class="btn bd" style="left:1628px;top:936px;width:47px;height:34px"></div><svg class="ico" style="left:1646px;top:947px" width="11" height="12" viewBox="0 0 11 12"><path d="M3.8 1V0.2H7.2V1H10.6V2.4H0.4V1Z" fill="#fff"/><path d="M1.3 3.2H9.7V11.8H1.3Z" fill="#fff"/><path d="M3.4 4.4V10.6M5.5 4.4V10.6M7.6 4.4V10.6" stroke="#d9534f" stroke-width="0.9"/></svg><div class="t" style="left:1159px;top:991px;">Monthly PRIO update 449 to 447</div><div class="btn bp" style="left:1478px;top:995px;width:48px;height:34px"></div><svg class="ico" style="left:1495px;top:1005px" width="14" height="13" viewBox="0 0 14 13"><path d="M5.6 0H8.4V4.4H11.6L7 8.8 2.4 4.4H5.6Z" fill="#fff"/><path d="M0.5 8.6H4.8L7 10.6 9.2 8.6H13.5V12.6H0.5Z" fill="#fff"/><rect x="9.6" y="10.4" width="1.1" height="1.1" fill="#337ab7"/><rect x="11.4" y="10.4" width="1.1" height="1.1" fill="#337ab7"/></svg><div class="btn bs" style="left:1551px;top:995px;width:47px;height:34px"></div><svg class="ico" style="left:1568px;top:1006px" width="13" height="13" viewBox="0 0 12 12"><path d="M0.6 0.6H9.6L11.4 2.4V11.4H0.6Z" fill="none" stroke="#fff" stroke-width="1.2"/><path d="M3 0.6V4.4H8.2V0.6" fill="none" stroke="#fff" stroke-width="1.2"/><rect x="6.4" y="1.4" width="1" height="2.2" fill="#fff"/><path d="M2.6 11.4V7.2H9.4V11.4" fill="none" stroke="#fff" stroke-width="1.2"/></svg><div class="btn bd" style="left:1628px;top:995px;width:47px;height:34px"></div><svg class="ico" style="left:1646px;top:1006px" width="11" height="12" viewBox="0 0 11 12"><path d="M3.8 1V0.2H7.2V1H10.6V2.4H0.4V1Z" fill="#fff"/><path d="M1.3 3.2H9.7V11.8H1.3Z" fill="#fff"/><path d="M3.4 4.4V10.6M5.5 4.4V10.6M7.6 4.4V10.6" stroke="#d9534f" stroke-width="0.9"/></svg><div class="t" style="left:1159px;top:1050px;">Monthly PRIO update 449 to 448</div><div class="btn bp" style="left:1478px;top:1054px;width:48px;height:34px"></div><svg class="ico" style="left:1495px;top:1064px" width="14" height="13" viewBox="0 0 14 13"><path d="M5.6 0H8.4V4.4H11.6L7 8.8 2.4 4.4H5.6Z" fill="#fff"/><path d="M0.5 8.6H4.8L7 10.6 9.2 8.6H13.5V12.6H0.5Z" fill="#fff"/><rect x="9.6" y="10.4" width="1.1" height="1.1" fill="#337ab7"/><rect x="11.4" y="10.4" width="1.1" height="1.1" fill="#337ab7"/></svg><div class="btn bs" style="left:1551px;top:1054px;width:47px;height:34px"></div><svg class="ico" style="left:1568px;top:1065px" width="13" height="13" viewBox="0 0 12 12"><path d="M0.6 0.6H9.6L11.4 2.4V11.4H0.6Z" fill="none" stroke="#fff" stroke-width="1.2"/><path d="M3 0.6V4.4H8.2V0.6" fill="none" stroke="#fff" stroke-width="1.2"/><rect x="6.4" y="1.4" width="1" height="2.2" fill="#fff"/><path d="M2.6 11.4V7.2H9.4V11.4" fill="none" stroke="#fff" stroke-width="1.2"/></svg><div class="btn bd" style="left:1628px;top:1054px;width:47px;height:34px"></div><svg class="ico" style="left:1646px;top:1065px" width="11" height="12" viewBox="0 0 11 12"><path d="M3.8 1V0.2H7.2V1H10.6V2.4H0.4V1Z" fill="#fff"/><path d="M1.3 3.2H9.7V11.8H1.3Z" fill="#fff"/><path d="M3.4 4.4V10.6M5.5 4.4V10.6M7.6 4.4V10.6" stroke="#d9534f" stroke-width="0.9"/></svg><div class="badge" style="left:1456px;top:808px"><span style="display:inline-block;transform:scaleY(1.07);transform-origin:50% 20px;position:relative;top:2px;-webkit-text-stroke:0.25px #fff">6</span></div><svg class="ico" style="left:1071px;top:702px" width="13" height="18" viewBox="0 0 13 18"><path d="M0.5 0.5V14.5L3.6 11.6 5.6 16.4 7.6 15.5 5.8 10.8H11.5Z" fill="#fff" stroke="#000" stroke-width="1" stroke-linejoin="miter"/></svg>

</div></body></html>
